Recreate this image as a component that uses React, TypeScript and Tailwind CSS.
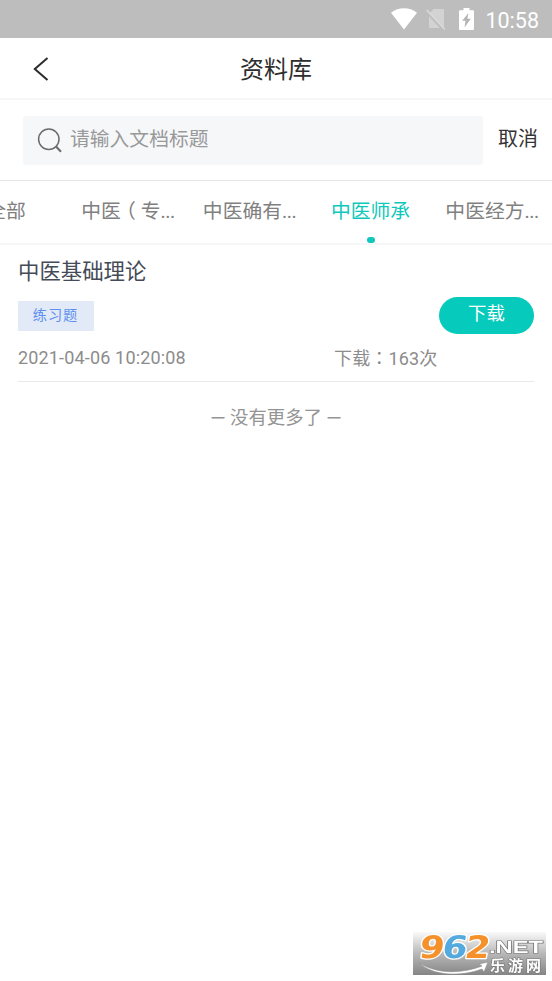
import React, { useState } from "react";
import clsx from "clsx";

const TABS = ["全部", "中医（专...", "中医确有...", "中医师承", "中医经方..."];

// centre-to-centre spacing of the tabs is uneven, each label has its own slot
const TAB_WIDTHS = ["w-[67px]", "w-[122px]", "w-[121px]", "w-[121px]", "w-[122px]"];

interface Doc {
  id: number;
  title: string;
  tag: string;
  createdAt: string;
  downloads: number;
}

const DOCS: Doc[] = [
  { id: 1, title: "中医基础理论", tag: "练习题", createdAt: "2021-04-06 10:20:08", downloads: 163 },
];

function StatusBar() {
  return (
    <div className="flex h-[38px] items-center justify-end bg-[#bdbdbd] pr-[13px] text-white">
      <svg className="-mt-px h-[22px] w-[28px]" viewBox="0 0 28 22" fill="currentColor">
        <path d="M14 21.5 1 4.8C4.8 1.7 9.2.3 14 .3s9.2 1.4 13 4.5z" />
      </svg>
      <svg className="ml-[8px] h-[22px] w-[20px]" viewBox="0 0 20 22">
        <path d="M7.500 1H17a1 1 0 0 1 1 1v17a1 1 0 0 1-1 1H4a1 1 0 0 1-1-1V6z" fill="#d3d3d3" />
        <path d="M0 3.500 17 22" stroke="#bdbdbd" strokeWidth="2" />
        <path d="M.8 2.200 19 21.500" stroke="#d8d8d8" strokeWidth="1.700" />
      </svg>
      <svg className="ml-[13px] mr-px -mt-px h-[22px] w-[15px]" viewBox="0 0 15 22">
        <path d="M4.500 0h6v2.200H14a1 1 0 0 1 1 1V21a1 1 0 0 1-1 1H1a1 1 0 0 1-1-1V3.200a1 1 0 0 1 1-1h3.500z" fill="currentColor" />
        <path d="M9.500 5 3.200 12.800h3.300L5.500 19.500l6.300-8.800H8.400z" fill="#b4b4b4" />
      </svg>
      <span className="ml-[10px] mt-[3px] font-['Roboto'] text-[21.5px] leading-none">10:58</span>
    </div>
  );
}

function Header() {
  return (
    <header className="grid h-[62px] grid-cols-[60px_1fr_60px] items-center border-b-2 border-[#f5f6f7]">
      <svg className="ml-[33px] mt-[2px] h-[24px] w-[16px]" viewBox="0 0 16 24" fill="none" stroke="#2b2b2b" strokeWidth="2">
        <path d="M14.500 1 1.800 12l12.700 11" />
      </svg>
      <h1 className="mt-[4px] text-center text-[24px] leading-none text-[#2e2e2e]">资料库</h1>
    </header>
  );
}

function SearchBar() {
  return (
    <div className="flex h-[81px] items-center border-b border-[#e6e6e6] pl-[23px] pr-[14px]">
      <div className="flex h-[49px] w-[460px] items-center rounded-[3px] bg-[#f6f7f9] pl-[14px]">
        <svg className="h-[26px] w-[26px]" viewBox="0 0 26 26" fill="none" stroke="#6b6b6b" strokeWidth="1.500">
          <circle cx="11.800" cy="12.300" r="10.200" />
          <path d="m18.800 19.300 5.200 5.500" strokeWidth="2" />
        </svg>
        <span className="ml-[7px] text-[19.8px] leading-none text-[#999]">请输入文档标题</span>
      </div>
      <button className="mb-[3px] ml-auto text-[20px] leading-none text-[#333]">取消</button>
    </div>
  );
}

// fullwidth punctuation is set centred in its cell
function CentredPunctuation({ text }: { text: string }) {
  return (
    <>
      {text.split(/([（：])/).map((part, i) =>
        /[（：]/.test(part) ? (
          <span
            key={i}
            lang="zh-TW"
            className={clsx("font-['Noto_Sans_CJK_TC',sans-serif] leading-[10px]", part === "（" && "-ml-[5px] mr-[5px]")}
          >
            {part}
          </span>
        ) : (
          part
        )
      )}
    </>
  );
}

function Tabs() {
  const [active, setActive] = useState(3);

  return (
    <nav className="flex h-[64px] overflow-hidden border-b-2 border-[#f7f7f7]">
      {TABS.map((tab, i) => (
        <button
          key={tab}
          onClick={() => setActive(i)}
          className={clsx(
            "flex shrink-0 flex-col items-center whitespace-nowrap pt-[20px] text-[19.8px] leading-[22px]",
            TAB_WIDTHS[i],
            i === 0 && "pr-[55px]",
            i === active ? "text-[#0fc8bb]" : "text-[#808080]"
          )}
        >
          <span>
            <CentredPunctuation text={tab.replace("...", "")} />
            {tab.endsWith("...") && <span className="tracking-[-0.5px]">...</span>}
          </span>
          {i === active && <i className="mt-[14px] h-[8px] w-[8px] rounded-[3px] bg-[#0fc8bb]" />}
        </button>
      ))}
    </nav>
  );
}

function DocItem({ doc }: { doc: Doc }) {
  return (
    <li className="mx-[18px] h-[137px] border-b border-[#e9e9e9] pt-[16px]">
      <h2 className="text-[21.4px] leading-[22px] text-[#454a57]">{doc.title}</h2>
      <div className="mt-[14px] flex h-[37px] items-center justify-between">
        <span className="flex h-[30px] w-[76px] items-center justify-center bg-[#e2eaf7] pr-px text-[14.200px] leading-none tracking-[1px] text-[#6090ef]">
          {doc.tag}
        </span>
        <button className="h-[37px] w-[95px] rounded-full bg-[#06cabb] pb-[2px] text-[18.400px] leading-none text-white">
          下载
        </button>
      </div>
      <div className="mt-[13px] flex text-[18px] leading-[22px] text-[#8c8c8c]">
        <span className="w-[316px] font-['Roboto'] tracking-[0.16px]">{doc.createdAt}</span>
        <span className="pt-px tracking-[0.16px]">
          <CentredPunctuation text={`下载：${doc.downloads}次`} />
        </span>
      </div>
    </li>
  );
}

function Watermark() {
  return (
    <svg
      className="fixed bottom-[6px] right-[6px] h-[43px] w-[133px] overflow-visible"
      viewBox="0 0 133 43"
      fontFamily="'DejaVu Sans', sans-serif"
      fontWeight="bold"
    >
      <defs>
        <linearGradient id="wm" x1="0" y1="0" x2="0" y2="1">
          <stop offset="0" stopColor="#fafafa" />
          <stop offset="0.5" stopColor="#b8b8b8" />
          <stop offset="1" stopColor="#858585" />
        </linearGradient>
      </defs>
      <rect width="133" height="43" fill="url(#wm)" />
      <path d="M6 31c18 11 42 11 63 3l-3-2 9-2-4 10-2-3C48 45 20 44 6 31z" fill="#fff" stroke="#8a8a8a" strokeWidth=".6" />
      <g fontSize="31" transform="translate(4 0) skewX(-9)" stroke="#fff" strokeWidth="2.500" paintOrder="stroke" strokeLinejoin="round">
        <text x="5" y="26" textLength="25" lengthAdjust="spacingAndGlyphs" fill="#f5912b">9</text>
        <text x="28" y="26" textLength="25" lengthAdjust="spacingAndGlyphs" fill="#54aade">6</text>
        <text x="51" y="26" textLength="25" lengthAdjust="spacingAndGlyphs" fill="#f5912b">2</text>
      </g>
      <g fill="#fff" stroke="#777" strokeWidth="1.200" paintOrder="stroke" fontFamily="'Liberation Sans', sans-serif">
        <text x="76" y="20.500" fontSize="17" textLength="54" lengthAdjust="spacingAndGlyphs">.NET</text>
        <text x="77" y="39" fontSize="15" textLength="51" fontFamily="'Noto Sans CJK SC', sans-serif">乐游网</text>
      </g>
    </svg>
  );
}

export default function App() {
  return (
    <div lang="zh-CN" className="min-h-screen bg-white font-['Roboto','Noto_Sans_CJK_SC',sans-serif]">
      <StatusBar />
      <Header />
      <SearchBar />
      <Tabs />
      <ul>
        {DOCS.map((doc) => (
          <DocItem key={doc.id} doc={doc} />
        ))}
      </ul>
      <p className="mt-[25px] flex items-center justify-center gap-[5px] text-[18.400px] leading-[22px] text-[#949494]">
        <span className="text-[14px] font-medium">一</span>
        <span>没有更多了</span>
        <span className="text-[14px] font-medium">一</span>
      </p>
      <Watermark />
    </div>
  );
}
